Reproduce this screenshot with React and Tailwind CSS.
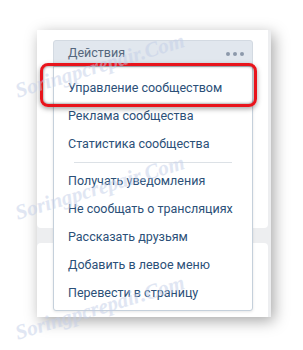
import React from 'react';

const groupOne = ['Реклама сообщества', 'Статистика сообщества'];
const groupTwo = [
  'Получать уведомления',
  'Не сообщать о трансляциях',
  'Рассказать друзьям',
  'Добавить в левое меню',
  'Перевести в страницу',
];

const MenuItem = ({ label }) => (
  <div className="h-[28px] flex items-center pl-[14px] text-[12.5px] text-[#2b5078]">{label}</div>
);

const Watermark = ({ top }) => (
  <div
    className="absolute left-[16px] w-[200px] text-[21px] italic font-bold text-[#c3cee8] opacity-50 -rotate-[17deg] origin-left whitespace-nowrap pointer-events-none"
    style={{ top, fontFamily: '"Liberation Serif", serif' }}
  >
    Soringpcrepair.Com
  </div>
);

export default function App() {
  return (
    <div className="relative w-[303px] h-[350px] bg-white overflow-hidden" style={{ fontFamily: 'Roboto, "Noto Sans", sans-serif' }}>
      <div className="pt-[30px] pl-[37px]">
        {/* cropped page region */}
        <div className="relative w-[234px] h-[287px] bg-[#edeef0] shadow-[3px_4px_14px_rgba(0,0,0,0.35)]">
          <div className="w-[231px] h-[198px] bg-white rounded-b-[4px] pt-[10px] pl-[16px]">
            <div className="w-[200px] h-[27px] bg-[#e1e7ee] border border-[#d3dae2] rounded-t-[3px] flex items-center justify-between pl-[14px] pr-[8px]">
              <span className="text-[12.5px] text-[#55677d]">Действия</span>
              <span className="flex gap-[3px]">
                <span className="w-[4px] h-[4px] rounded-full bg-[#8c99aa]" />
                <span className="w-[4px] h-[4px] rounded-full bg-[#8c99aa]" />
                <span className="w-[4px] h-[4px] rounded-full bg-[#8c99aa]" />
              </span>
            </div>
          </div>
          <div className="mt-[15px] w-[231px] h-[74px] bg-white rounded-t-[4px]" />

          {/* dropdown */}
          <div className="absolute left-[16px] top-[36px] w-[200px] h-[245px] bg-white border border-[#c5d0db] rounded-b-[3px] shadow-[0_1px_3px_rgba(0,0,0,0.1)] pt-[7px]">
            <MenuItem label="Управление сообществом" />
            {groupOne.map(item => <MenuItem key={item} label={item} />)}
            <div className="h-[9px] flex items-center px-[20px]">
              <div className="w-full h-px bg-[#dce1e6]" />
            </div>
            {groupTwo.map(item => <MenuItem key={item} label={item} />)}
          </div>
        </div>
      </div>

      {/* red highlight */}
      <div className="absolute left-[40px] top-[63px] w-[217px] h-[44px] rounded-[8px] border-[3px] border-[#e8141c] shadow-[0_2px_5px_rgba(0,0,0,0.35),inset_0_0_3px_rgba(0,0,0,0.6)]" />

      <Watermark top="76px" />
      <Watermark top="198px" />
      <Watermark top="318px" />
    </div>
  );
}
